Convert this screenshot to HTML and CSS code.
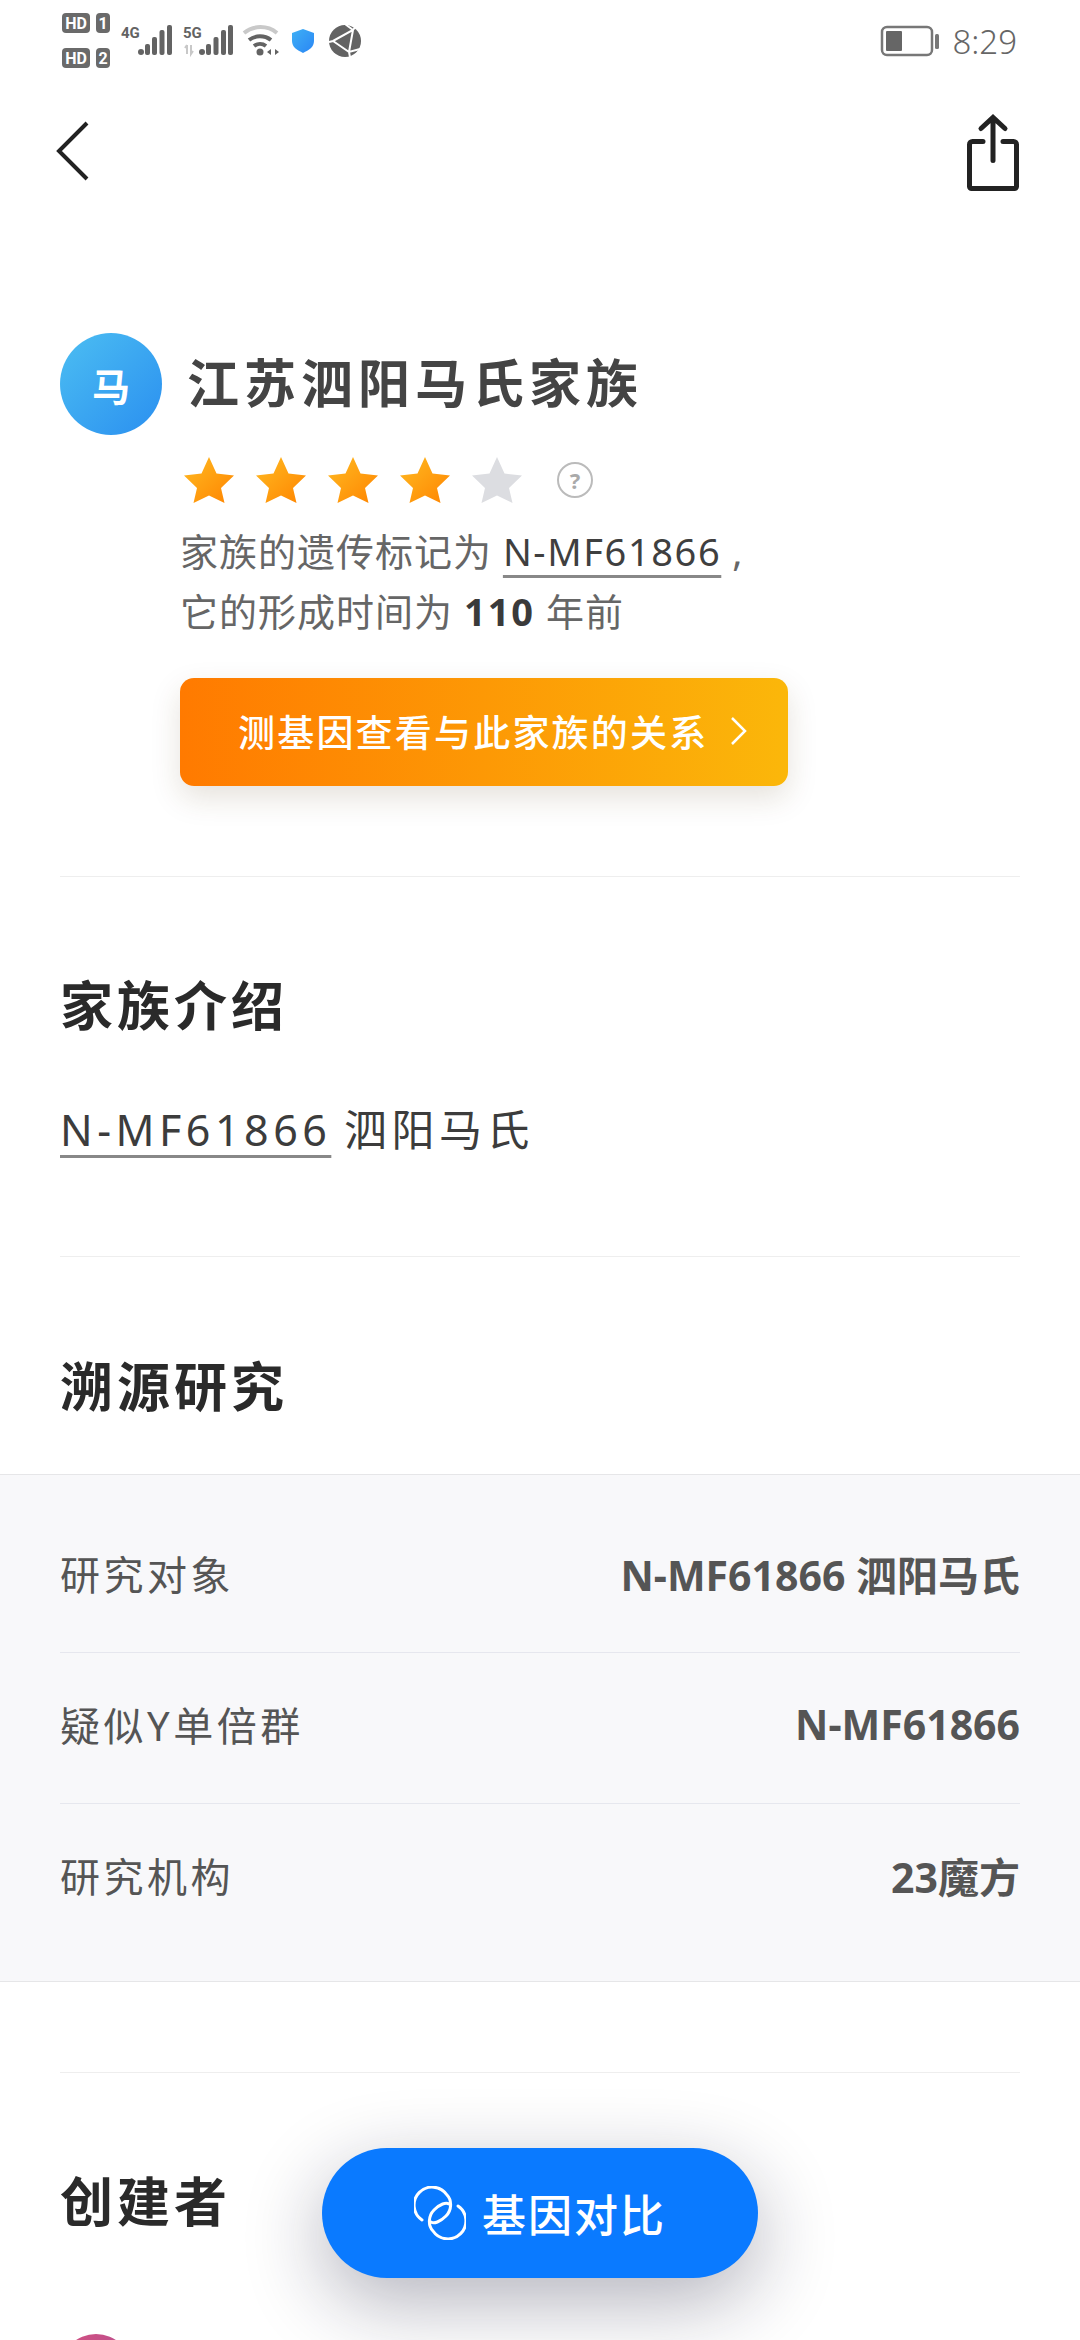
FILE: index.html
```html
<!DOCTYPE html>
<html lang="zh-CN">
<head>
    <meta charset="UTF-8">
    <meta name="viewport" content="width=device-width, initial-scale=1.0">
    <title>江苏泗阳马氏家族</title>

    <link rel="stylesheet" href="styles.css">
</head>

<body>
<div class="page">
    <!-- status bar -->
    <div class="status-bar">
        <svg class="status-icons" width="370" height="82" viewBox="0 0 370 82">
            <defs>
                <linearGradient id="shield-fill" x1="0" y1="0" x2="1" y2="1">
                    <stop offset="0" stop-color="#3fb0f5"/>
                    <stop offset="1" stop-color="#2a86f5"/>
                </linearGradient>
            </defs>
            <!-- sim badges -->
            <rect x="62" y="13" width="28" height="20" rx="4" fill="#6a6a6a"/>
            <rect x="96" y="13" width="14" height="20" rx="4" fill="#6a6a6a"/>
            <rect x="62" y="48" width="28" height="20" rx="4" fill="#6a6a6a"/>
            <rect x="96" y="48" width="14" height="20" rx="4" fill="#6a6a6a"/>
            <text class="sim-text" x="76" y="29" text-anchor="middle">HD</text>
            <text class="sim-text" x="103" y="29" text-anchor="middle">1</text>
            <text class="sim-text" x="76" y="64" text-anchor="middle">HD</text>
            <text class="sim-text" x="103" y="64" text-anchor="middle">2</text>
            <!-- 4G signal -->
            <text class="net-text" x="121" y="38">4G</text>
            <g fill="#636363">
                <circle cx="141" cy="52" r="3"/>
                <rect x="145" y="44" width="5" height="11" rx="2"/>
                <rect x="152" y="37" width="5" height="18" rx="2"/>
                <rect x="159.500" y="30" width="5" height="25" rx="2"/>
                <rect x="167" y="25" width="5" height="30" rx="2"/>
            </g>
            <!-- 5G signal -->
            <text class="net-text" x="183" y="38">5G</text>
            <path d="M187 45v9M185 48l2-3M191 45v9l2-3" stroke="#c8c8c8" stroke-width="2" fill="none"/>
            <g fill="#636363">
                <circle cx="202" cy="52" r="3"/>
                <rect x="206" y="44" width="5" height="11" rx="2"/>
                <rect x="213.500" y="37" width="5" height="18" rx="2"/>
                <rect x="221" y="30" width="5" height="25" rx="2"/>
                <rect x="228" y="25" width="5" height="30" rx="2"/>
            </g>
            <!-- wifi -->
            <path d="M244 33a26 26 0 0 1 33 0" stroke="#c9c9c9" stroke-width="4" fill="none"/>
            <path d="M249 40a18 18 0 0 1 22 0M254 46a10 10 0 0 1 12 0" stroke="#636363" stroke-width="4" fill="none"/>
            <circle cx="260" cy="52" r="3.500" fill="#636363"/>
            <path d="M271 49v6l-4-3zM275 49v6l4-3z" fill="#636363"/>
            <!-- shield -->
            <path d="M303 29l11 4v8c0 6-5 9-11 12-6-3-11-6-11-12v-8z" fill="url(#shield-fill)"/>
            <!-- globe -->
            <circle cx="345" cy="41" r="16" fill="#636363"/>
            <path d="M329 42l4-1 20-11 3-4M353 30l-4 22 1 5M333 41l16 11 11-3M353 30l-8-6" stroke="#fff" stroke-width="2" fill="none"/>
        </svg>
        <div class="status-right">
            <svg width="60" height="32" viewBox="0 0 60 32">
                <rect x="2" y="2" width="50" height="28" rx="5" fill="none" stroke="#777" stroke-width="2.500"/>
                <rect x="6" y="6" width="16" height="20" rx="1" fill="#666"/>
                <rect x="55" y="9" width="4" height="15" rx="1.500" fill="#777"/>
            </svg>
            <span class="status-time">8:29</span>
        </div>
    </div>

    <!-- top navigation -->
    <div class="nav">
        <svg class="nav-back" width="34" height="64" viewBox="0 0 34 64">
            <path d="M31 4 L3 32 L31 60" fill="none" stroke="#222" stroke-width="4"/>
        </svg>
        <svg class="nav-share" width="60" height="84" viewBox="0 0 60 84">
            <path d="M19 28.500H8.500a3 3 0 0 0-3 3v42a2 2 0 0 0 2 2h43a2 2 0 0 0 2-2v-42a3 3 0 0 0-3-3H39" fill="none" stroke="#222" stroke-width="5" stroke-linecap="round"/>
            <path d="M29 4.500v43M17 15.500l12-11 12 11" fill="none" stroke="#222" stroke-width="5" stroke-linecap="round"/>
        </svg>
    </div>

    <!-- family summary -->
    <div class="family">
        <div class="family-head">
            <div class="avatar">马</div>
            <h1 class="family-name">江苏泗阳马氏家族</h1>
        </div>
        <div class="family-body">
            <div class="stars">
                <svg class="star" viewBox="0 0 52 48">
                    <defs>
                        <linearGradient id="star-on" x1="0" y1="0" x2="1" y2="1">
                            <stop offset="0" stop-color="#ffbb22"/>
                            <stop offset="1" stop-color="#ff8400"/>
                        </linearGradient>
                    </defs>
                    <path id="star-shape" d="M26 1l7.500 16.500 17.500 2-13 12.500 3.500 15L26 39.500 10.500 47 14 32 1 19.500l17.500-2z" fill="url(#star-on)"/>
                </svg>
                <svg class="star" viewBox="0 0 52 48"><use href="#star-shape"/></svg>
                <svg class="star" viewBox="0 0 52 48"><use href="#star-shape"/></svg>
                <svg class="star" viewBox="0 0 52 48"><use href="#star-shape"/></svg>
                <svg class="star" viewBox="0 0 52 48">
                    <path d="M26 1l7.500 16.500 17.500 2-13 12.500 3.500 15L26 39.500 10.500 47 14 32 1 19.500l17.500-2z" fill="#dcdde1"/>
                </svg>
                <span class="help">?</span>
            </div>
            <p class="desc">家族的遗传标记为 <span class="marker">N-MF61866</span> ,</p>
            <p class="desc">它的形成时间为 <b>110</b> 年前</p>
            <div class="test-btn">
                <span>测基因查看与此家族的关系</span>
                <svg width="18" height="30" viewBox="0 0 18 30">
                    <path d="M2 2l13 13L2 28" fill="none" stroke="#fff" stroke-width="2.500"/>
                </svg>
            </div>
        </div>
    </div>

    <!-- introduction -->
    <div class="section section-intro">
        <h2 class="section-title">家族介绍</h2>
        <p class="intro-text"><span class="intro-marker">N-MF61866</span> 泗阳马氏</p>
    </div>

    <!-- research -->
    <div class="section section-research">
        <h2 class="section-title">溯源研究</h2>
    </div>
    <div class="research-panel">
        <div class="research-row">
            <span class="row-label">研究对象</span>
            <span class="row-value">N-MF61866 泗阳马氏</span>
        </div>
        <div class="research-row">
            <span class="row-label">疑似Y单倍群</span>
            <span class="row-value">N-MF61866</span>
        </div>
        <div class="research-row">
            <span class="row-label">研究机构</span>
            <span class="row-value">23魔方</span>
        </div>
    </div>

    <!-- creator -->
    <div class="section section-creator">
        <h2 class="section-title">创建者</h2>
        <div class="creator-avatar"></div>
    </div>

    <!-- floating button -->
    <div class="compare-btn">
        <svg width="52" height="54" viewBox="0 0 52 54">
            <path d="M8 34A18 18 0 1 1 33 9C38 14 38 24 32 30 26 36 20 38 17 36" fill="none" stroke="#fff" stroke-width="3" stroke-linecap="round"/>
            <path d="M44 20A18 18 0 1 1 19 45C14 40 14 30 20 24 26 18 32 16 35 18" fill="none" stroke="#fff" stroke-width="3" stroke-linecap="round"/>
        </svg>
        <span>基因对比</span>
    </div>
</div>
</body>
</html>
```

FILE: styles.css
```css
/* page */
body {
    margin: 0;
    padding: 0;
    background-color: #fff;
    font-family: "Noto Sans", "Noto Sans CJK SC", sans-serif;
}

h1,
h2,
p {
    margin: 0;
}

.page {
    position: relative;
    width: 1080px;
    height: 2340px;
    overflow: hidden;
}

/* status bar */
.status-bar {
    display: flex;
    justify-content: space-between;
    align-items: center;
    height: 82px;
}

.status-icons {
    display: block;
}

.sim-text {
    font-family: "Roboto", sans-serif;
    font-size: 16px;
    font-weight: 700;
    fill: #fff;
}

.net-text {
    font-family: "Roboto", sans-serif;
    font-size: 15px;
    font-weight: 700;
    fill: #636363;
}

.status-right {
    display: flex;
    align-items: center;
    gap: 12px;
    padding-right: 63px;
}

.status-time {
    font-size: 33px;
    font-weight: 300;
    color: #666;
}

/* navigation */
.nav {
    display: flex;
    justify-content: space-between;
    align-items: flex-start;
    height: 118px;
    padding: 0 56px;
}

.nav-back {
    margin-top: 37px;
}

.nav-share {
    margin-top: 31px;
}

/* family summary */
.family {
    padding: 133px 60px 90px;
}

.family-head {
    display: flex;
    align-items: center;
    gap: 25px;
}

.avatar {
    display: flex;
    justify-content: center;
    align-items: center;
    width: 102px;
    height: 102px;
    border-radius: 50%;
    background: linear-gradient(135deg, #4cbef2, #2a8ff0);
    color: #fff;
    font-size: 38px;
    font-weight: 700;
}

.family-name {
    padding-bottom: 8px;
    font-size: 52px;
    font-weight: 700;
    letter-spacing: 5px;
    color: #444;
}

.family-body {
    margin-left: 120px;
}

.stars {
    display: flex;
    align-items: center;
    gap: 20px;
    margin-top: 21px;
    margin-left: 3px;
    height: 48px;
}

.star {
    width: 52px;
    height: 48px;
}

.help {
    display: flex;
    justify-content: center;
    align-items: center;
    width: 32px;
    height: 32px;
    margin-left: 14px;
    border: 2px solid #bbb;
    border-radius: 50%;
    color: #aaa;
    font-size: 22px;
    font-weight: 700;
}

.desc {
    font-size: 38px;
    line-height: 60px;
    letter-spacing: 1px;
    color: #666;
}

.stars + .desc {
    margin-top: 17px;
}

.desc b {
    letter-spacing: 2px;
    color: #3a3a3a;
}

.marker {
    letter-spacing: 1.600px;
    color: #3f3f3f;
    text-decoration: underline 3px #888;
    text-decoration-skip-ink: none;
    text-underline-offset: 9px;
}

.test-btn {
    display: flex;
    align-items: center;
    gap: 22px;
    width: 608px;
    height: 108px;
    box-sizing: border-box;
    margin-top: 37px;
    padding-left: 58px;
    padding-bottom: 2px;
    border-radius: 14px;
    background: linear-gradient(90deg, #ff7a00, #fbb70a);
    box-shadow: 0 12px 30px rgba(90, 60, 20, 0.15);
    color: #fff;
    font-size: 37px;
    font-weight: 500;
    letter-spacing: 2.200px;
}

/* sections */
.section {
    margin: 0 60px;
    border-top: 1px solid #eeeeee;
}

.section-title {
    font-size: 53px;
    line-height: 70px;
    font-weight: 700;
    letter-spacing: 4px;
    color: #2a2a2a;
}

.section-intro {
    height: 380px;
    padding-top: 94px;
    box-sizing: border-box;
}

.intro-text {
    margin-top: 59px;
    font-size: 43px;
    line-height: 60px;
    letter-spacing: 4.500px;
    color: #3c3c3c;
}

.intro-marker {
    margin-right: -3px;
    text-decoration: underline 3px #888;
    text-decoration-skip-ink: none;
    text-underline-offset: 9px;
}

.section-research {
    height: 218px;
    padding-top: 95px;
    box-sizing: border-box;
}

/* research table */
.research-panel {
    box-sizing: border-box;
    height: 508px;
    padding: 27px 60px;
    border-top: 1px solid #e6e6e8;
    border-bottom: 1px solid #e6e6e8;
    background-color: #f8f8fa;
}

.research-row {
    display: flex;
    justify-content: space-between;
    align-items: center;
    height: 142px;
    padding-bottom: 8px;
    border-bottom: 1px solid #e6e7ee;
}

.research-row:last-child {
    border-bottom: none;
}

.row-label {
    font-size: 40px;
    letter-spacing: 3.500px;
    color: #555;
}

.row-value {
    font-size: 41px;
    font-weight: 700;
    color: #555;
}

.section-creator {
    margin-top: 90px;
    padding-top: 94px;
}

.creator-avatar {
    width: 72px;
    height: 72px;
    margin-top: 97px;
    border-radius: 50%;
    background: linear-gradient(135deg, #d4507f, #a8509c);
}

/* floating compare button */
.compare-btn {
    position: absolute;
    left: 322px;
    top: 2148px;
    display: flex;
    justify-content: center;
    align-items: center;
    gap: 16px;
    width: 436px;
    height: 130px;
    border-radius: 65px;
    background-color: #0a7aff;
    box-shadow: 0 24px 80px rgba(20, 20, 50, 0.32);
    color: #fff;
    font-size: 44px;
    font-weight: 500;
    letter-spacing: 2px;
}
```
